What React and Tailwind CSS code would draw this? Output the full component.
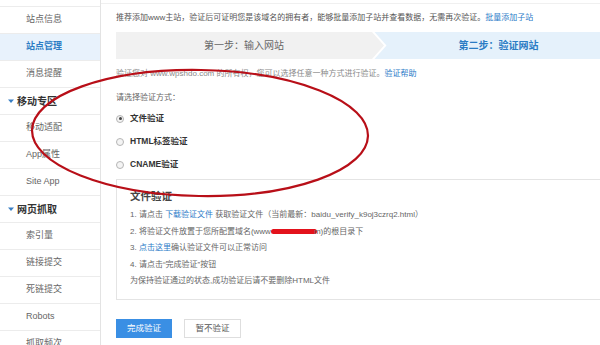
import React from "react";

const font = "font-['Liberation_Sans','Noto_Sans_CJK_SC',sans-serif]";

function SideRow({ children, active }) {
  return (
    <div
      className={`h-[27px] border-b border-[#ececec] flex items-center pl-[26px] text-[9px] ${
        active ? "bg-[#e8f2fc] text-[#2b7cc4] font-bold" : "text-[#666]"
      }`}
    >
      {children}
    </div>
  );
}

function SideHeader({ children }) {
  return (
    <div className="h-[27px] border-b border-[#ececec] flex items-center pl-[8px] text-[10px] font-bold text-[#333]">
      <svg width="6" height="5" viewBox="0 0 6 5" className="mr-[3px]">
        <polygon points="0,0.5 6,0.5 3,4" fill="#3a7fc4" />
      </svg>
      {children}
    </div>
  );
}

function Radio({ checked, label }) {
  return (
    <div className="h-[23px] flex items-center">
      <span className="ml-[-1px] w-[8px] h-[8px] rounded-full border border-[#b5b5b5] bg-[#f4f4f4] flex items-center justify-center">
        {checked && <span className="w-[3px] h-[3px] rounded-full bg-[#444]" />}
      </span>
      <span className="ml-[6px] text-[8.5px] font-bold text-[#333]">{label}</span>
    </div>
  );
}

export default function App() {
  return (
    <div className={`relative w-[600px] h-[345px] overflow-hidden bg-white flex ${font}`}>
      {/* Sidebar */}
      <div className="w-[101px] shrink-0 border-r border-[#e3e3e3] h-full">
        <div className="h-[7px] border-b border-[#ececec]" />
        <SideRow>站点信息</SideRow>
        <SideRow active>站点管理</SideRow>
        <SideRow>消息提醒</SideRow>
        <SideHeader>移动专区</SideHeader>
        <SideRow>移动适配</SideRow>
        <SideRow>App属性</SideRow>
        <SideRow>Site App</SideRow>
        <SideHeader>网页抓取</SideHeader>
        <SideRow>索引量</SideRow>
        <SideRow>链接提交</SideRow>
        <SideRow>死链提交</SideRow>
        <SideRow>Robots</SideRow>
        <SideRow>抓取频次</SideRow>
      </div>

      {/* Main */}
      <div className="flex-1 min-w-0 overflow-hidden">
        <div className="h-[4px] border-b border-[#f0f0f0]" />
        <div className="pl-[15px] w-[524px]">
          <div className="mt-[7px] h-[14px] leading-[14px] text-[8px] text-[#555] whitespace-nowrap">
            推荐添加www主站，验证后可证明您是该域名的拥有者，能够批量添加子站并查看数据，无需再次验证。
            <span className="text-[#2b7bc8]">批量添加子站</span>
          </div>

          {/* Steps */}
          <div className="mt-[7px] h-[27px] w-[509px] flex bg-[#e5f1fb]">
            <div className="relative w-[256px] h-full bg-[#f1f1f1] flex items-center justify-center text-[10px] text-[#666]">
              第一步：输入网站
              <svg
                width="16"
                height="27"
                viewBox="0 0 16 27"
                className="absolute left-full top-0"
              >
                <polygon points="0,0 2.5,0 14.5,13.5 2.5,27 0,27" fill="#ffffff" />
                <polygon points="0,0 12,13.5 0,27" fill="#f1f1f1" />
              </svg>
            </div>
            <div className="flex-1 h-full flex items-center justify-center text-[10px] font-bold text-[#2b7cc4]">
              第二步：验证网站
            </div>
          </div>

          <div className="mt-[8px] h-[14px] leading-[14px] text-[8px] text-[#8a8a8a] whitespace-nowrap">
            验证您对 www.wpshdo.com 的所有权，您可以选择任意一种方式进行验证。
            <span className="text-[#2b7bc8]">验证帮助</span>
          </div>

          <div className="mt-[10px] h-[14px] leading-[14px] text-[8px] text-[#666]">请选择验证方式：</div>

          <div className="mt-[2px] pl-[1px]">
            <Radio checked label="文件验证" />
            <Radio label="HTML标签验证" />
            <Radio label="CNAME验证" />
          </div>

          {/* Box */}
          <div className="mt-[3px] h-[121px] w-[509px] border border-[#e4e4e4] pl-[13px] pt-[8px] text-[#666] text-[8px]">
            <div className="h-[16px] leading-[16px] text-[10.5px] font-bold text-[#444]">文件验证</div>
            <div className="mt-[3px] leading-[16.5px] whitespace-nowrap">
              <div>
                1. 请点击 <span className="text-[#2b7bc8]">下载验证文件</span> 获取验证文件（当前最新：baidu_verify_k9oj3czrq2.html）
              </div>
              <div className="flex items-center">
                2. 将验证文件放置于您所配置域名(www
                <span className="inline-block w-[46px] h-[5px] rounded-full bg-[#e3121c] -mr-[3px]" />
                m)的根目录下
              </div>
              <div>
                3. <span className="text-[#2b7bc8]">点击这里</span>确认验证文件可以正常访问
              </div>
              <div>4. 请点击“完成验证”按钮</div>
              <div>为保持验证通过的状态,成功验证后请不要删除HTML文件</div>
            </div>
          </div>

          {/* Buttons */}
          <div className="mt-[19px] flex gap-[12px]">
            <div className="w-[56px] h-[19px] bg-[#3a8fe4] text-white text-[8.5px] flex items-center justify-center">
              完成验证
            </div>
            <div className="w-[57px] h-[19px] border border-[#dedede] bg-white text-[#555] text-[8.5px] flex items-center justify-center">
              暂不验证
            </div>
          </div>
        </div>
      </div>

      {/* Hand-drawn red annotation */}
      <svg
        className="absolute left-0 top-0 pointer-events-none"
        width="600"
        height="345"
        viewBox="0 0 600 345"
      >
        <ellipse
          cx="200"
          cy="133"
          rx="168"
          ry="63"
          fill="none"
          stroke="#b80f18"
          strokeWidth="2.2"
          transform="rotate(1 200 133)"
        />
      </svg>
    </div>
  );
}
